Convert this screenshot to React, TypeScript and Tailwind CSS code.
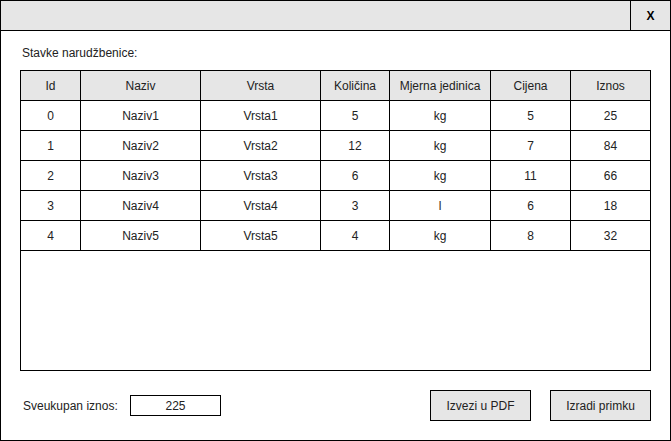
import React from "react";

const cols = [
  "w-[60px] border-r",
  "w-[120px] border-r",
  "w-[120px] border-r",
  "w-[69px] border-r",
  "w-[101px] border-r",
  "w-[80px] border-r",
  "w-[79px]",
];

const header = ["Id", "Naziv", "Vrsta", "Količina", "Mjerna jedinica", "Cijena", "Iznos"];
const rows = [
  ["0", "Naziv1", "Vrsta1", "5", "kg", "5", "25"],
  ["1", "Naziv2", "Vrsta2", "12", "kg", "7", "84"],
  ["2", "Naziv3", "Vrsta3", "6", "kg", "11", "66"],
  ["3", "Naziv4", "Vrsta4", "3", "l", "6", "18"],
  ["4", "Naziv5", "Vrsta5", "4", "kg", "8", "32"],
];

function Row({ cells, head }: { cells: string[]; head?: boolean }) {
  return (
    <div className={`flex h-[30px] border-b border-black ${head ? "bg-[#e6e6e6]" : ""}`}>
      {cells.map((c, i) => (
        <div key={i} className={`${cols[i]} border-black flex items-center justify-center`}>
          {c}
        </div>
      ))}
    </div>
  );
}

export default function App() {
  return (
    <div
      className="w-[671px] h-[441px] border border-black bg-white flex flex-col text-[12px] text-[#222]"
      style={{ fontFamily: '"Liberation Sans", Arial, sans-serif' }}
    >
      <div className="h-[30px] border-b border-black bg-[#e6e6e6] flex">
        <div className="flex-1" />
        <div className="w-[40px] border-l border-black flex items-center justify-center font-bold text-[12px] text-black">
          X
        </div>
      </div>
      <div className="flex flex-col px-[19px]">
        <div className="mt-[14px] h-[16px] leading-[16px] pl-[2px]">Stavke narudžbenice:</div>
        <div className="mt-[9px] w-[631px] h-[301px] border border-black flex flex-col">
          <Row cells={header} head />
          {rows.map((r, i) => (
            <Row key={i} cells={r} />
          ))}
        </div>
        <div className="mt-[19px] h-[31px] flex items-center">
          <div className="w-[110px] pl-[3px]">Sveukupan iznos:</div>
          <div className="w-[91px] h-[21px] border border-black flex items-center justify-center">225</div>
          <div className="ml-auto w-[101px] h-[31px] border border-black bg-[#e6e6e6] flex items-center justify-center">
            Izvezi u PDF
          </div>
          <div className="ml-[19px] w-[101px] h-[31px] border border-black bg-[#e6e6e6] flex items-center justify-center">
            Izradi primku
          </div>
        </div>
      </div>
    </div>
  );
}
